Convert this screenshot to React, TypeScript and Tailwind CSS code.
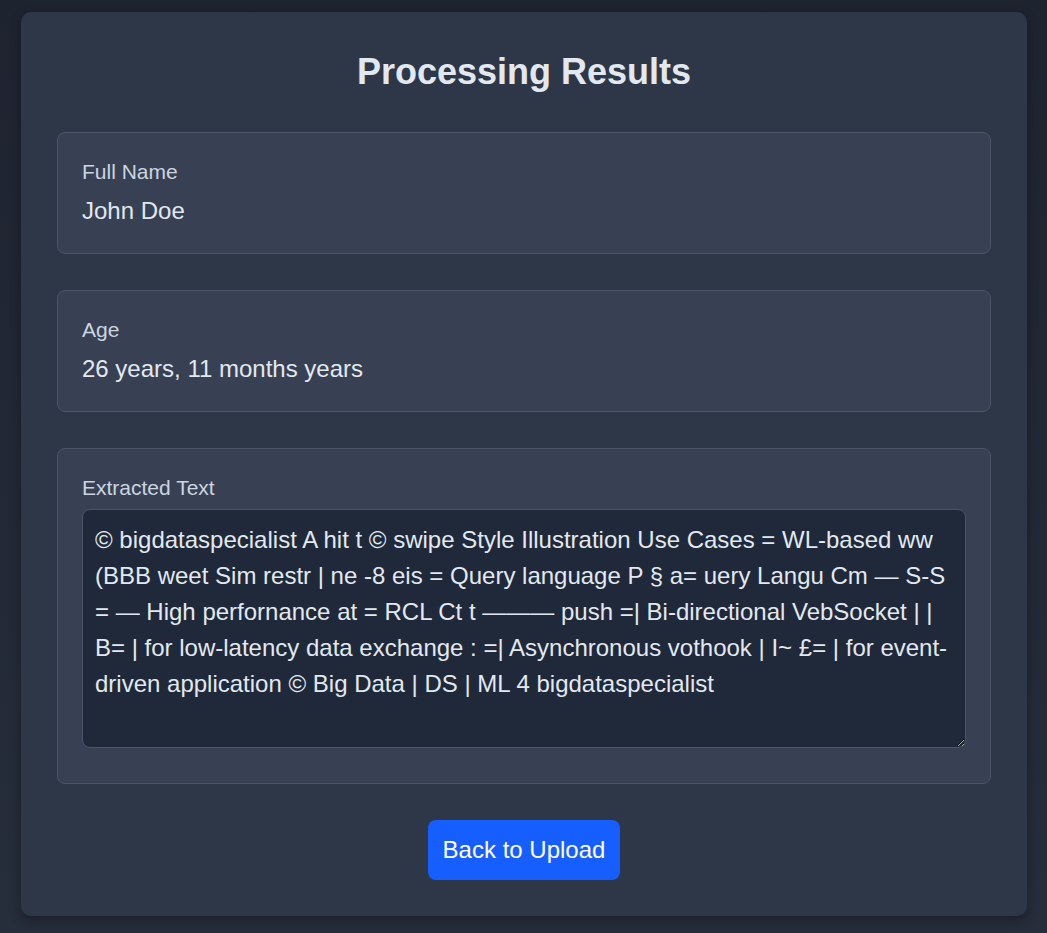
import React from "react";

const extracted =
  "© bigdataspecialist A hit t © swipe Style Illustration Use Cases = WL-based ww (BBB weet Sim restr | ne -8 eis = Query language P § a= uery Langu Cm — S-S = — High perfornance at = RCL Ct t ——— push =| Bi-directional VebSocket | | B= | for low-latency data exchange : =| Asynchronous vothook | I~ £= | for event-driven application © Big Data | DS | ML 4 bigdataspecialist";

export default function App() {
  return (
    <div
      className="min-h-[933px] w-full bg-gradient-to-b from-[#1e2330] to-[#262d3b] pl-[21px] pr-[20px] pt-[12px] pb-[17px]"
      style={{ fontFamily: '"Liberation Sans", Arial, sans-serif' }}
    >
      <div className="rounded-[10px] bg-[#2e3748] px-[36px] pt-[36px] pb-[36px] shadow-[0_4px_12px_rgba(0,0,0,0.3)]">
        <h1 className="text-center text-[36px] font-bold leading-[48px] text-[#e2e8f0]">
          Processing Results
        </h1>

        <div className="mt-[36px] rounded-[8px] border border-[#4a5568] bg-[#374153] px-[24px] py-[24px]">
          <div className="text-[21px] leading-[30px] text-[#cbd5e0]">Full Name</div>
          <div className="mt-[6px] text-[24px] leading-[36px] text-[#e2e8f0]">John Doe</div>
        </div>

        <div className="mt-[36px] rounded-[8px] border border-[#4a5568] bg-[#374153] px-[24px] py-[24px]">
          <div className="text-[21px] leading-[30px] text-[#cbd5e0]">Age</div>
          <div className="mt-[6px] text-[24px] leading-[36px] text-[#e2e8f0]">
            26 years, 11 months years
          </div>
        </div>

        <div className="mt-[36px] rounded-[8px] border border-[#4a5568] bg-[#374153] px-[24px] pt-[24px] pb-[35px]">
          <div className="text-[21px] leading-[30px] text-[#cbd5e0]">Extracted Text</div>
          <textarea
            readOnly
            defaultValue={extracted}
            className="mt-[6px] block h-[239px] w-full resize-y rounded-[8px] border border-[#4a5568] bg-[#1f2939] px-[12px] py-[12px] text-[24px] leading-[36px] text-[#e2e8f0] outline-none"
            style={{ fontFamily: '"Liberation Sans", Arial, sans-serif' }}
          />
        </div>

        <div className="mt-[36px] flex justify-center">
          <button className="rounded-[8px] bg-[#175eff] px-[15px] py-[12px] text-[24px] leading-[36px] text-white">
            Back to Upload
          </button>
        </div>
      </div>
    </div>
  );
}
